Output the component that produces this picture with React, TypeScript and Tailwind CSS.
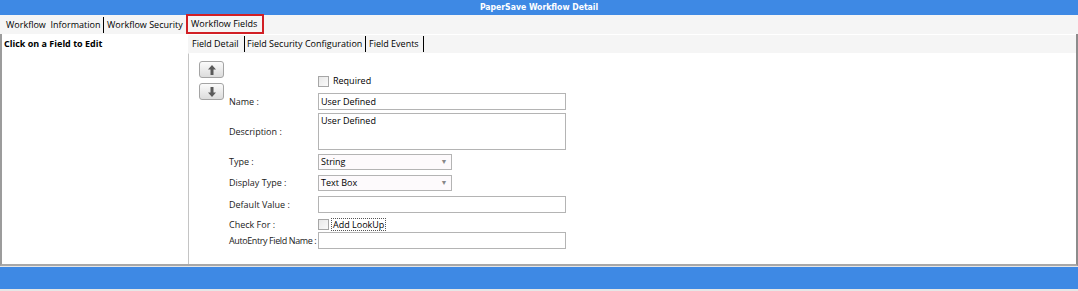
import React from 'react';

const font = "font-['Open_Sans',sans-serif]";

const Sep = () => <div className="w-px h-[16px] bg-black shrink-0" />;

const Label: React.FC<{ text: string; tight?: boolean }> = ({ text, tight }) => (
  <div className={`w-[89px] shrink-0 whitespace-nowrap text-[9px] text-[#222] ${tight ? 'tracking-[-0.4px]' : ''}`}>{text}</div>
);

const Select: React.FC<{ value: string }> = ({ value }) => (
  <div className="w-[134px] h-[16px] border border-[#b4b4b4] bg-[#fdfafc] flex items-center pl-[2px] text-[9px]">
    <span className="flex-1">{value}</span>
    <span className="w-[14px] flex justify-center text-[#888] text-[7px]">▼</span>
  </div>
);

const Check = () => <div className="w-[11px] h-[11px] border border-[#a6a6a6] bg-gradient-to-br from-[#e8e8e8] to-[#fafafa]" />;

const ArrowBtn: React.FC<{ down?: boolean }> = ({ down }) => (
  <div className="w-[25px] h-[17px] rounded-[3px] border border-[#a4a4a4] bg-gradient-to-b from-[#fbfbfb] to-[#dcdcdc] flex items-center justify-center">
    <svg width="8" height="10" viewBox="0 0 8 10" className={down ? 'rotate-180' : ''}>
      <path d="M4 0 L8 4.5 L5.5 4.5 L5.5 10 L2.5 10 L2.5 4.5 L0 4.5 Z" fill="#5a5a5a" />
    </svg>
  </div>
);

export default function App() {
  return (
    <div className={`w-[1078px] h-[291px] flex flex-col bg-[#e6e6e6] text-black ${font}`}>
      {/* title bar */}
      <div className="h-[15px] bg-[#3e89e4] text-white text-[8.6px] font-bold leading-[15px] text-center font-['DejaVu_Sans_Condensed','DejaVu_Sans',sans-serif]">
        PaperSave Workflow Detail
      </div>

      {/* main tabs */}
      <div className="h-[19px] bg-[#f5f5f5] flex items-center text-[9px] pl-[6px] whitespace-pre">
        <span className="w-[97px]">Workflow  Information</span>
        <Sep />
        <span className="ml-[3px] w-[79px]">Workflow Security</span>
        <div className="w-[78px] h-[20px] -mt-[2px] border-2 border-[#d11f25] pl-[3px] flex items-center">Workflow Fields</div>
      </div>

      <div className="h-[232px] flex bg-white border-l-2 border-[#9c9c9c] border-b-2 border-b-[#a8a8a8] border-r-2 border-r-[#8c8c8c]">
        {/* left field list */}
        <div className="w-[186px] pl-[2px] pt-[3px] text-[9px] font-bold whitespace-nowrap">Click on a Field to Edit</div>

        {/* right detail */}
        <div className="flex-1 flex flex-col">
          <div className="h-[18px] bg-[#f5f5f5] flex items-center text-[9px] pl-[4px] mt-[1px] whitespace-nowrap">
            <span className="w-[52px]">Field Detail</span>
            <Sep />
            <span className="ml-[2px] w-[118px]">Field Security Configuration</span>
            <Sep />
            <span className="ml-[3px] w-[54px]">Field Events</span>
            <Sep />
          </div>

          <div className="flex-1 flex border-l border-[#c4c4c4] border-t border-t-white pl-[10px]">
            <div className="flex flex-col gap-[5px] pt-[7px]">
              <ArrowBtn />
              <ArrowBtn down />
            </div>

            <div className="flex flex-col ml-[5px] pt-[21px]">
              <div className="flex items-center h-[12px] pl-[89px] gap-[4px] text-[9px]">
                <Check />
                <span>Required</span>
              </div>
              <div className="flex items-center mt-[6px]">
                <Label text="Name :" />
                <div className="w-[248px] h-[17px] border border-[#b4b4b4] text-[9px] pl-[2px] leading-[15px]">User Defined</div>
              </div>
              <div className="flex items-center mt-[3px]">
                <Label text="Description :" />
                <div className="w-[248px] h-[37px] border border-[#b4b4b4] text-[9px] pl-[2px] leading-[13px]">User Defined</div>
              </div>
              <div className="flex items-center mt-[4px]">
                <Label text="Type :" />
                <Select value="String" />
              </div>
              <div className="flex items-center mt-[5px]">
                <Label text="Display Type  :" />
                <Select value="Text Box" />
              </div>
              <div className="flex items-center mt-[5px]">
                <Label text="Default Value :" />
                <div className="w-[248px] h-[17px] border border-[#b4b4b4]" />
              </div>
              <div className="flex items-center mt-[5px] h-[13px]">
                <Label text="Check For :" />
                <Check />
                <span className="ml-[2px] px-[1px] border border-dotted border-[#555] text-[9px] leading-[11px]">Add LookUp</span>
              </div>
              <div className="flex items-center mt-[1px]">
                <Label text="AutoEntry Field Name :" tight />
                <div className="w-[248px] h-[17px] border border-[#b4b4b4]" />
              </div>
            </div>
          </div>
        </div>
      </div>

      {/* status bar */}
      <div className="h-[22px] bg-[#3e89e4] mt-[1px]" />
    </div>
  );
}
